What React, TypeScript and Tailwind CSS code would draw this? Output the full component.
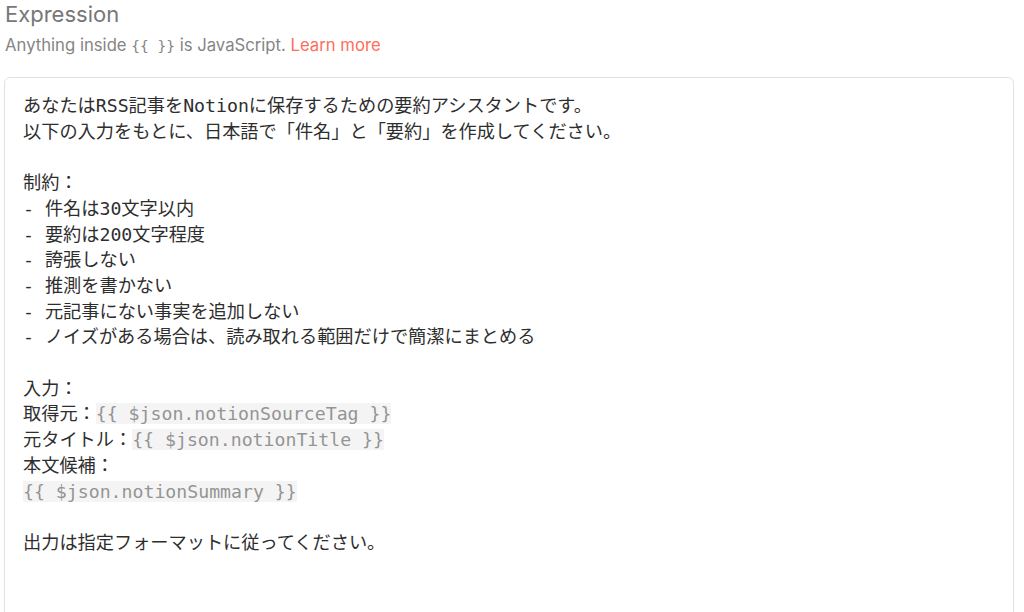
const mono = "font-['DejaVu_Sans_Mono','Noto_Sans_CJK_JP',monospace]";

function Expr({ children }: { children: string }) {
  return <span className="bg-[#f4f4f4] text-[#949494]">{children}</span>;
}

export default function App() {
  return (
    <div className="w-[1024px] h-[612px] overflow-hidden bg-white pl-[4px] font-['Inter','Noto_Sans_CJK_JP',sans-serif]">
      {/* Header */}
      <div className="ml-px text-[22px] leading-[28px] text-[#777]">Expression</div>
      <div className="ml-px mt-[7px] text-[16.7px] leading-[20px] text-[#858585]">
        Anything inside <span className={`${mono} text-[14.5px]`}>{"{{ }}"}</span> is JavaScript.{" "}
        <span className="text-[#ff6d5a]">Learn more</span>
      </div>

      {/* Editor */}
      <div className="mt-[21px] mr-[10px] h-[560px] rounded-md border border-[#e2e2e2] pl-[18px] pt-[15px]">
        <div className={`${mono} text-[18.2px] leading-[25.7px] text-[#2e2e2e] whitespace-pre-wrap`}>
          {"あなたはRSS記事をNotionに保存するための要約アシスタントです。\n以下の入力をもとに、日本語で「件名」と「要約」を作成してください。\n\n制約：\n- 件名は30文字以内\n- 要約は200文字程度\n- 誇張しない\n- 推測を書かない\n- 元記事にない事実を追加しない\n- ノイズがある場合は、読み取れる範囲だけで簡潔にまとめる\n\n入力：\n取得元："}
          <Expr>{"{{ $json.notionSourceTag }}"}</Expr>
          {"\n元タイトル："}
          <Expr>{"{{ $json.notionTitle }}"}</Expr>
          {"\n本文候補：\n"}
          <Expr>{"{{ $json.notionSummary }}"}</Expr>
          {"\n\n出力は指定フォーマットに従ってください。"}
        </div>
      </div>
    </div>
  );
}
